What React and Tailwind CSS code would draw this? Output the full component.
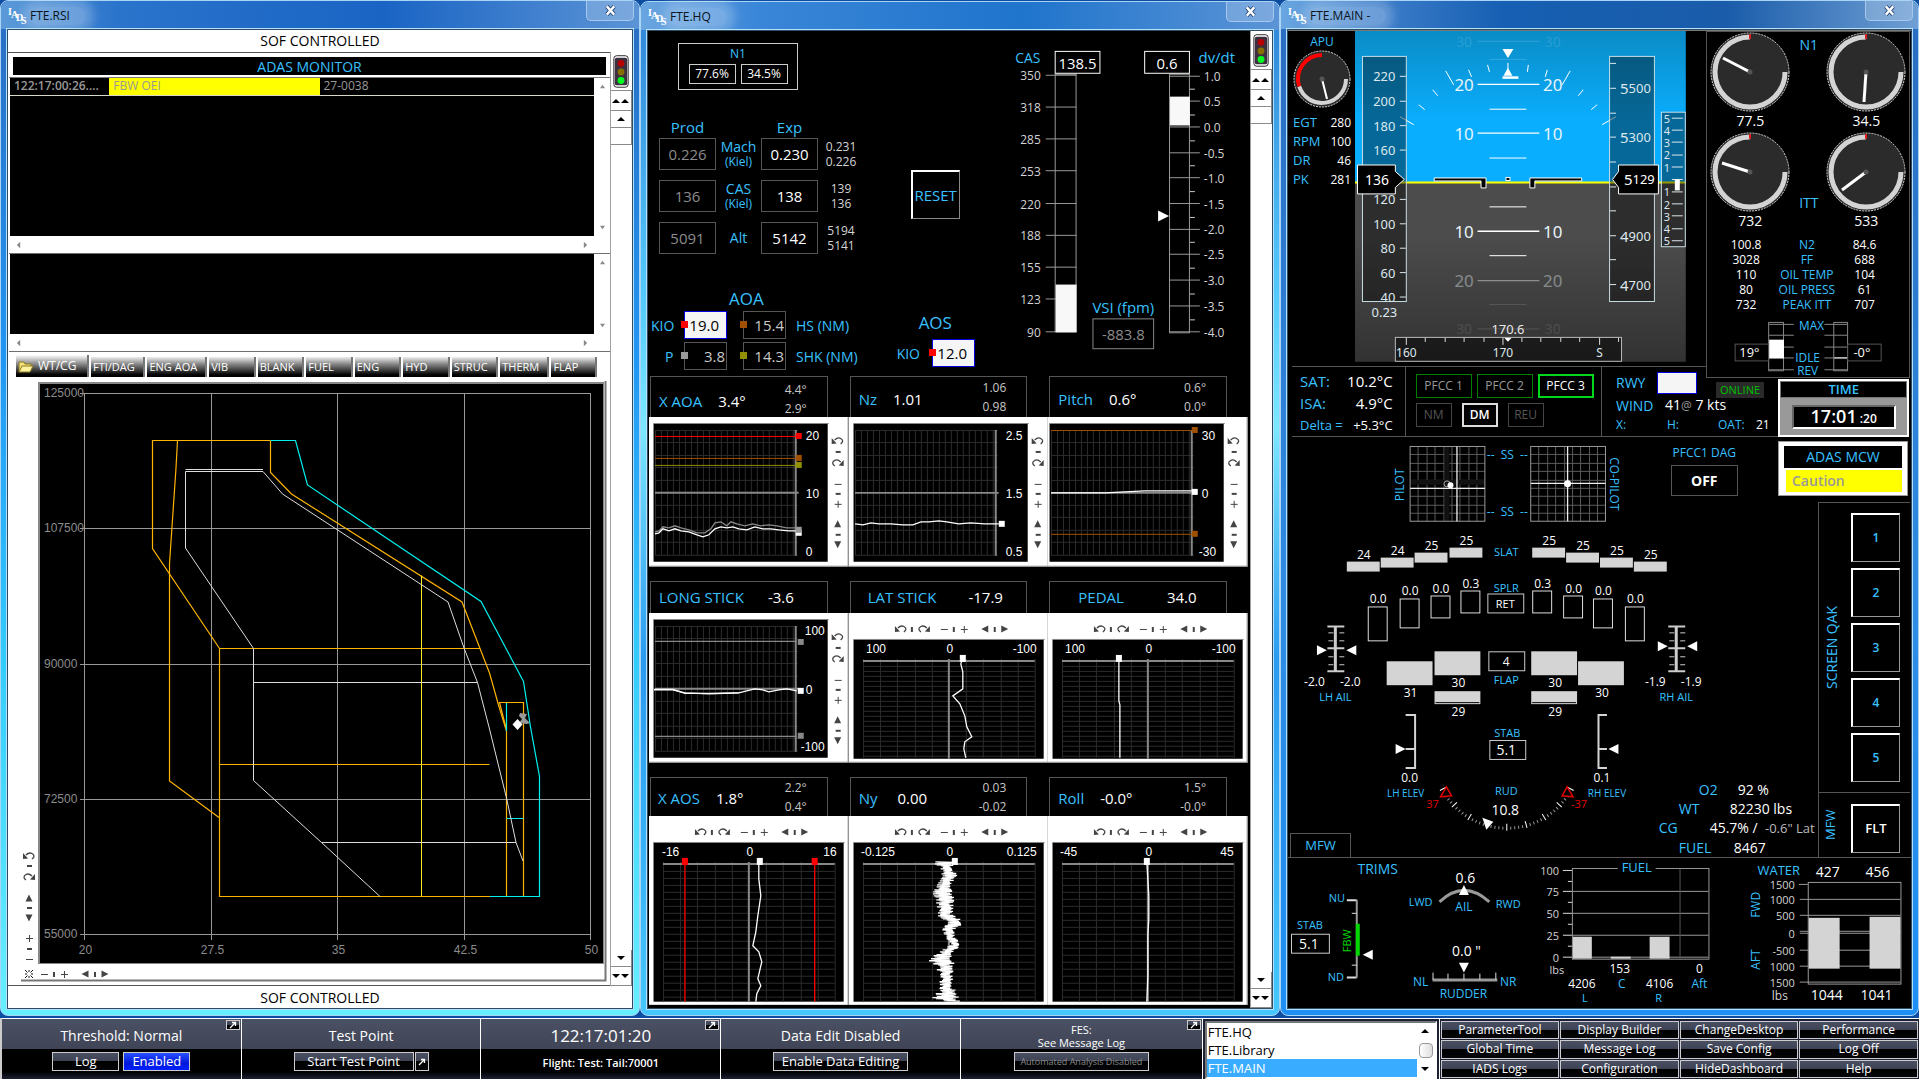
import React from "react";

const SIZES = {
  10: "text-[10px]",
  11: "text-[11px]",
  12: "text-[12px]",
  13: "text-[13px]",
  14: "text-[14px]",
  15: "text-[15px]",
  17: "text-[17px]",
};
const CYAN = "fill-[#38c0ff]";
const WHITE = "fill-white";
const SOFT = "fill-[#d4d4d4]";
const DIM = "fill-[#8c8c8c]";
const UI = "font-['Open_Sans',sans-serif]";
const ARIAL = "font-['Liberation_Sans',sans-serif]";

function T({ x, y, s = 12, c = WHITE, a = "middle", f = "", rotate, children, ...rest }) {
  return (
    <text
      x={x}
      y={y}
      textAnchor={a}
      dominantBaseline="central"
      transform={rotate ? `rotate(${rotate} ${x} ${y})` : undefined}
      className={`${SIZES[s]} ${c} ${f}`}
      {...rest}
    >
      {children}
    </text>
  );
}

const tri = {
  right: (x, y, r = 5) => `${x - r},${y - r} ${x + r},${y} ${x - r},${y + r}`,
  left: (x, y, r = 5) => `${x + r},${y - r} ${x - r},${y} ${x + r},${y + r}`,
  up: (x, y, r = 5) => `${x - r},${y + r} ${x + r},${y + r} ${x},${y - r}`,
  down: (x, y, r = 5) => `${x - r},${y - r} ${x + r},${y - r} ${x},${y + r}`,
};

/* ---------- window chrome ---------- */

function Logo() {
  return (
    <svg viewBox="0 0 18 18" className="h-[18px] w-[18px] shrink-0 overflow-visible font-['Liberation_Serif',serif] text-[10px] font-bold" aria-label="IADS">
      <text x="0" y="8" fill="#fff">I</text>
      <text x="3" y="11" fill="#fff">A</text>
      <text x="8" y="14" fill="#fff">D</text>
      <text x="13" y="17" fill="#fff">S</text>
    </svg>
  );
}

function Window({ title, frame, bar, children }) {
  return (
    <section className={`flex min-w-0 flex-col rounded-lg border border-[#a9d4f5] px-[6px] pb-[6px] ${frame}`}>
      <header className={`-mx-[6px] flex h-[28px] items-start justify-between rounded-t-lg pl-[7px] ${bar}`}>
        <div className="flex items-center gap-1 pt-[6px]">
          <Logo />
          <h1 className="rounded-full bg-white/25 pr-4 text-[12px] leading-[18px] text-[#0a1420] shadow-[0_0_10px_8px_rgba(255,255,255,0.22)]">
            {title}
          </h1>
        </div>
        <button
          aria-label={`Close ${title}`}
          className="mr-[5px] flex h-5 w-12 items-center justify-center rounded-b-[5px] border border-t-0 border-[#a6c8ee] bg-white/20"
        >
          <svg viewBox="0 0 12 12" className="h-[11px] w-[11px]">
            <path d="M2 1.500L10 10.500M10 1.500L2 10.500" stroke="#23426e" strokeWidth="4.500" />
            <path d="M2 1.500L10 10.500M10 1.500L2 10.500" stroke="#fff" strokeWidth="2.600" />
          </svg>
        </button>
      </header>
      <div className="flex flex-1 flex-col border border-[#2d4d66] outline outline-1 outline-[#b5e2fa]">{children}</div>
    </section>
  );
}

function Arrow({ d, count = 1 }) {
  const pts = d === "up" ? "0,4 8,4 4,0" : "0,0 8,0 4,4";
  return (
    <span className="flex items-center justify-center">
      {Array.from({ length: count }, (_, i) => (
        <svg key={i} viewBox="0 0 9 4" className="h-1 w-[9px]">
          <polygon points={pts} fill="#000" />
        </svg>
      ))}
    </span>
  );
}

function SideStrip() {
  const b = "flex w-full items-center justify-center border-r border-b border-[#8a8a8a] bg-white";
  return (
    <div className="flex w-[22px] shrink-0 flex-col border-l border-[#a0a0a0] bg-white">
      <svg viewBox="0 0 22 38" className="h-[38px] w-full">
        <rect x="3" y="3" width="15" height="33" rx="3" fill="#fff" stroke="#222" />
        <rect x="4" y="5" width="13" height="29" rx="2" fill="#3c3040" />
        <circle cx="10.500" cy="11" r="3.600" fill="#b80000" />
        <circle cx="10.500" cy="20" r="3.600" fill="#857000" />
        <circle cx="10.500" cy="29" r="3.600" fill="#00ff20" />
      </svg>
      <button aria-label="Page up" className={`h-[21px] border-t ${b}`}><Arrow d="up" count={2} /></button>
      <button aria-label="Up" className={`h-[17px] ${b}`}><Arrow d="up" /></button>
      <div className={`h-[17px] ${b}`} />
      <div className="flex-1" />
      <button aria-label="Down" className={`h-[17px] ${b}`}><Arrow d="down" /></button>
      <button aria-label="Page down" className={`h-[19px] ${b}`}><Arrow d="down" count={2} /></button>
    </div>
  );
}

/* ---------- small axis-control glyphs ---------- */

const CTL = "#444";
function Glyph({ k, x, y, vertical }) {
  const at = `translate(${x} ${y})`;
  if (k === "ccw" || k === "cw")
    return (
      <g transform={`${at}${k === "cw" ? " scale(-1 1)" : ""}`}>
        <path d="M-3 -1Q0 -4 3 -2.500Q7 0 3 3" fill="none" stroke={CTL} strokeWidth="1.300" />
        <polygon points="-6,-3 -6,3 -1,2.500" fill={CTL} />
      </g>
    );
  if (k === "tick")
    return vertical ? (
      <rect x={x - 2} y={y - 1} width="5" height="2" fill={CTL} />
    ) : (
      <rect x={x - 1} y={y - 2} width="2" height="5" fill={CTL} />
    );
  if (k === "minus") return <rect x={x - 3} y={y} width="7" height="1" fill={CTL} />;
  if (k === "plus") return <path d={`M${x - 3} ${y + 0.5}h7M${x + 0.5} ${y - 3}v7`} stroke={CTL} />;
  if (k === "burst")
    return (
      <path
        d="M-4 -4L-1.500 -1.500M4 4L1.500 1.500M4 -4L1.500 -1.500M-4 4L-1.500 1.500M0 -4V-2M0 2V4M-4 0H-2M2 0H4"
        transform={at} stroke="#111"
      />
    );
  return <polygon points={tri[k](x, y, 3.5)} fill={CTL} />;
}

function VControls({ x, y }) {
  return [["ccw", 24], ["tick", 35], ["cw", 46], ["minus", 67], ["tick", 77], ["plus", 87], ["up", 107], ["tick", 118], ["down", 128]].map(
    ([k, dy]) => <Glyph key={dy} k={k} x={x} y={y + dy} vertical />
  );
}
function HControls({ x, y }) {
  return [["ccw", 52], ["tick", 63], ["cw", 75], ["minus", 95], ["tick", 105], ["plus", 115], ["left", 136], ["tick", 146], ["right", 156]].map(
    ([k, dx]) => <Glyph key={dx} k={k} x={x + dx} y={y} />
  );
}

/* ---------- RSI window ---------- */

function ScrollList({ height, children }) {
  const a = "h-[5px] w-[5px] shrink-0";
  return (
    <div className={`flex flex-col border-b border-[#707070] bg-white pl-px ${height}`}>
      <div className="flex flex-1">
        <div className="flex-1 bg-black">{children}</div>
        <div className="flex w-4 flex-col items-center justify-between py-[6px]">
          <svg viewBox="0 0 6 6" className={a}><polygon points="0,5 6,5 3,1" fill="#888" /></svg>
          <svg viewBox="0 0 6 6" className={a}><polygon points="0,1 6,1 3,5" fill="#888" /></svg>
        </div>
      </div>
      <div className="flex h-[17px] items-center justify-between pr-[22px] pl-[6px]">
        <svg viewBox="0 0 6 8" className="h-2 w-[5px]"><polygon points="5,0 5,8 1,4" fill="#888" /></svg>
        <svg viewBox="0 0 6 8" className="h-2 w-[5px]"><polygon points="1,0 1,8 5,4" fill="#888" /></svg>
      </div>
    </div>
  );
}

const TABS = [
  ["FTI/DAG", 57], ["ENG AOA", 63], ["VIB", 48], ["BLANK", 48], ["FUEL", 48], ["ENG", 48],
  ["HYD", 48], ["STRUC", 48], ["THERM", 51], ["FLAP", 47],
];

function EnvelopePlot() {
  const xs = [[83.5, "20"], [210.5, "27.5"], [336.5, "35"], [463.5, "42.5"], [589.5, "50"]];
  const ys = [[393.5, "125000"], [528.5, "107500"], [664.5, "90000"], [799.5, "72500"], [934.5, "55000"]];
  return (
    <svg viewBox="8 381 601 602" className="block w-full bg-white" role="img" aria-label="Weight and centre of gravity envelope">
      <rect x="37" y="382" width="566" height="582" fill="#888" />
      <rect x="39" y="384" width="563" height="579" fill="#000" />
      <path d="M604.500 381V980.500H20" fill="none" stroke="#777" strokeWidth="2" />
      <g stroke="#999" fill="none">
        {xs.map(([x]) => <path key={x} d={`M${x} 393V940`} />)}
        {ys.map(([y]) => <path key={y} d={`M79 ${y}H590`} />)}
      </g>
      {ys.map(([y, l]) => <T key={l} x={43} y={y - 1} s={12} c={DIM} a="start" f={ARIAL}>{l}</T>)}
      {xs.map(([x, l]) => <T key={l} x={x + 1} y={950} s={12} c={DIM} f={ARIAL}>{l}</T>)}
      <g fill="none" stroke="#ffb400" strokeWidth="1.200">
        <path d="M269.500 440.500H151.500V548.500L218.500 648.500H479" />
        <path d="M176.500 440.500L175 468L168.500 563.500V781L218 817.500" />
        <path d="M218.500 648.500V896.500H489" />
        <path d="M269.500 440.500V472.500L290.500 494L461 602L479 648.500L488.500 673L497.500 705L505.500 731V896.500" />
        <path d="M505 728L498.500 702.500H522.500V896.500" />
        <path d="M218.500 764.500H488.500" />
      </g>
      <path d="M420.500 575.500V896.500" stroke="#ffee20" />
      <g fill="none" stroke="#00f0f0" strokeWidth="1.200">
        <path d="M269.500 440.500H294.500L306.500 485L480 601.500L522.500 681.500L529.500 727L538.500 776.500V896.500H489" />
        <path d="M505.500 703V731M505.500 818.500H522.500" />
      </g>
      <g fill="none" stroke="#ddd">
        <path d="M184.500 469.500H262M262 471.500H184.500V548L252.500 648.500V780.500L320.500 842.500L379 896.500" />
        <path d="M262 471.500L281.500 494L447 602L463 648L476.500 682.500L488 727L505.500 798L515 842.500L522 861" />
        <path d="M252.500 682.500H476.500M320.500 842.500H515" />
      </g>
      <path d="M519 713l7 1l-2 4l5 5l-3 1l-8 -1l3 -4l-3 -3z" fill="#999" />
      <polygon points="516.500,719 521.500,724.500 516.500,730 511.500,724.500" fill="#fff" />
      {[["ccw", 856], ["tick", 866], ["cw", 877], ["up", 898], ["tick", 908], ["down", 918], ["plus", 938], ["tick", 949], ["minus", 959]].map(
        ([k, y]) => <Glyph key={y} k={k} x={28} y={y} vertical />
      )}
      {[["burst", 28], ["minus", 43], ["tick", 53], ["plus", 63], ["left", 84], ["tick", 94], ["right", 104]].map(
        ([k, x]) => <Glyph key={x} k={k} x={x} y={974} />
      )}
    </svg>
  );
}

function RsiWindow() {
  const band = "flex h-[22px] items-center justify-center bg-white text-[14px] text-black";
  return (
    <Window
      title="FTE.RSI"
      frame="bg-[linear-gradient(180deg,#2a6cc0_0%,#2196f3_35%,#33ccff_65%,#66f0ff_100%)]"
      bar="bg-[linear-gradient(90deg,#5c9ad8_0%,#2a74cc_18%,#1a64c4_60%,#5b94d6_100%)]"
    >
      <div className={`pb-[2px] ${band}`}>SOF CONTROLLED</div>
      <div className="flex flex-1">
        <div className="flex min-w-0 flex-1 flex-col border-y border-[#555] bg-white pl-px">
          <div className="border-b border-[#777] px-1 pt-1 pb-[2px]">
            <h2 className="bg-black pt-px text-center text-[14px] leading-[17px] text-[#38c0ff]">ADAS MONITOR</h2>
          </div>
          <ScrollList height="h-[176px]">
            <table className="w-full table-fixed border-collapse text-left text-[12px] text-[#999]">
              <tbody>
                <tr className="h-[17px] border-b border-[#d8d8c8] leading-[16px]">
                  <td className="w-[17%] truncate p-0 px-1 font-semibold">122:17:00:26....</td>
                  <td className="w-[36%] bg-[#ffff00] p-0 px-1">FBW OEI</td>
                  <td className="p-0 px-1">27-0038</td>
                </tr>
              </tbody>
            </table>
          </ScrollList>
          <ScrollList height="h-[98px]" />
          <nav className="flex h-[29px] items-end bg-white pr-[13px] pb-[4px] pl-[7px]" aria-label="Displays">
            <button className="flex h-[22px] w-[73px] shrink-0 items-center gap-1 border-r-2 border-[#777] bg-[linear-gradient(#fff,#999_35%,#000_90%)] pl-[2px] text-[12px] text-white">
              <svg viewBox="0 0 16 13" className="h-[13px] w-4">
                <path d="M1 12V2h5l1 2h6v2" fill="#f5e27a" stroke="#8a7a20" />
                <path d="M1 12L4 6h11l-3 6z" fill="#fff3a0" stroke="#8a7a20" />
              </svg>
              WT/CG
            </button>
            {TABS.map(([t, w]) => (
              <button
                key={t}
                style={{ flexGrow: w }}
                className="h-5 w-0 border-r-2 border-l-2 border-r-[#777] border-l-white bg-[linear-gradient(#eee,#888_35%,#000_90%)] pl-[2px] text-left text-[11px] whitespace-nowrap text-white"
              >
                {t}
              </button>
            ))}
          </nav>
          <EnvelopePlot />
        </div>
        <SideStrip />
      </div>
      <div className={band}>SOF CONTROLLED</div>
    </Window>
  );
}

/* ---------- HQ window ---------- */

function Box({ className = "", children }) {
  return <div className={`flex items-center justify-center border ${className}`}>{children}</div>;
}

function ParamRow({ name, sub, prod, exp, hi, lo }) {
  return (
    <>
      <Box className="h-8 border-[#555] text-[15px] text-[#8c8c8c]">{prod}</Box>
      <div className="text-center text-[14px] leading-4 text-[#38c0ff]">
        {name}
        {sub && <div className="text-[12px] leading-[14px]">{sub}</div>}
      </div>
      <Box className="h-8 border-[#555] text-[15px] text-white">{exp}</Box>
      <div className="text-center text-[12px] leading-[15px] text-[#d4d4d4]">
        {hi}
        <br />
        {lo}
      </div>
    </>
  );
}

function Field({ label, value, square, bright }) {
  return (
    <div className="relative h-7 w-[43px]">
      <input
        aria-label={label}
        defaultValue={value}
        className={
          bright
            ? "h-full w-full border border-[#0000e0] bg-[#f5f5f5] pr-[7px] text-right text-[15px] text-black"
            : "h-full w-full border border-[#555] bg-black pr-px text-right text-[15px] text-[#c8c8c8]"
        }
      />
      <span className={`absolute top-[10px] -left-[3px] h-[7px] w-[7px] ${square}`} />
    </div>
  );
}

function SpeedTapes() {
  const cas = [[350, 74.5], [318, 106.5], [285, 138.5], [253, 170.5], [220, 203.5], [188, 235.5], [155, 267.5], [123, 299.5], [90, 332.5]];
  const dv = [75.5, 100.5, 126.5, 152.5, 177.5, 203.5, 229.5, 254.5, 280.5, 306.5, 332.5];
  return (
    <svg viewBox="1000 31 250 346" className="block w-full" role="img" aria-label="CAS, dv/dt and VSI">
      <T x={1029} y={57} s={14} c={CYAN}>CAS</T>
      <T x={1219} y={56} s={15} c={CYAN}>dv/dt</T>
      <g fill="none" stroke="#999">
        <rect x="1056.500" y="73.500" width="21" height="259" />
        <rect x="1171.500" y="73.500" width="20" height="260" />
        {cas.map(([v, y]) => <path key={v} d={`M1047 ${y}H1078`} />)}
        {dv.map((y) => <path key={y} d={`M1172 ${y}H1202`} />)}
        {dv.slice(1).map((y, i) => <path key={y} d={`M1192 ${Math.round((y + dv[i]) / 2) + 0.5}H1197`} stroke="#ccc" />)}
      </g>
      <rect x="1057" y="285" width="21" height="48" fill="#f8f8f8" />
      <rect x="1172" y="96" width="20" height="29" fill="#f8f8f8" />
      {cas.map(([v, y]) => <T key={v} x={1042} y={y} s={12} c={SOFT} a="end">{v}</T>)}
      {dv.map((y, i) => <T key={y} x={1206} y={y} s={12} c={SOFT} a="start">{(1 - i * 0.5).toFixed(1)}</T>)}
      <rect x="1056.500" y="50.500" width="45" height="22" stroke="#fff" />
      <rect x="1146.500" y="50.500" width="45" height="22" stroke="#fff" />
      <T x={1079} y={62} s={15}>138.5</T>
      <T x={1169} y={62} s={15}>0.6</T>
      <polygon points={tri.right(1165.5, 216, 5.5)} fill="#fff" />
      <T x={1125} y={308} s={15} c={CYAN}>VSI (fpm)</T>
      <rect x="1094.500" y="319.500" width="61" height="30" fill="none" stroke="#888" />
      <T x={1125} y={335} s={15} c={DIM}>-883.8</T>
    </svg>
  );
}

function ParamHeader({ name, value, hi, lo, place = "pl-2 pt-1 gap-4" }) {
  return (
    <div className="ml-px w-[89%] border border-b-0 border-[#555]">
      <div className={`flex h-full items-center pr-5 text-[15px] ${place}`}>
        <h3 className="text-[#38c0ff]">{name}</h3>
        <span className="text-white">{value}</span>
        {hi && (
          <div className="-mt-1 ml-auto text-right text-[12px] leading-[19px] text-[#c8c8c8]">
            {hi}
            <br />
            {lo}
          </div>
        )}
      </div>
    </div>
  );
}

function Frame({ h }) {
  return (
    <>
      <rect width="200" height={h} fill="#fff" />
      <path d={`M0 ${h - 0.5}H199.500V0`} stroke="#888" fill="none" />
    </>
  );
}

/* Strip chart whose time axis runs left to right. */
function StripH({ shift = 0, labels, limits = [], marks = [], traces, labelX = 157, label }) {
  const cols = Array.from({ length: 24 }, (_, i) => 6 + i * 6).filter((x) => x < 147);
  const rows = Array.from({ length: 11 }, (_, i) => 13 + i * 12.5);
  return (
    <svg viewBox="0 0 200 150" className="block w-full" role="img" aria-label={label}>
      <Frame h={150} />
      <g transform={`translate(${shift} 0)`}>
        <path d="M4.500 145V6.500H180" fill="none" stroke="#888" />
        <rect x="5" y="7" width="174" height="138" fill="#000" />
        <g stroke="#2c2c2c">
          {cols.map((x) => <path key={x} d={`M${x + 0.5} 13V138`} />)}
          {rows.map((y) => <path key={y} d={`M6 ${Math.floor(y) + 0.5}H149`} />)}
        </g>
        <path d="M6 76H150M147 13V139" stroke="#888" strokeWidth="2" />
        {limits.map(([y, c]) => (
          <g key={y}>
            <path d={`M6 ${y + 0.5}H148`} stroke={c} />
            <rect x="147" y={y - 3} width="6" height="6" fill={c} />
          </g>
        ))}
        {traces.map(([c, pts], i) => <polyline key={i} points={pts} fill="none" stroke={c} strokeWidth="1.300" />)}
        {marks.map(([x, y, c]) => <rect key={y} x={x} y={y} width="6" height="6" fill={c} />)}
        {labels.map(([y, l, x]) => (
          <T key={l} x={x ?? labelX} y={y} s={12} a="start" f={ARIAL}>{l}</T>
        ))}
        <VControls x={189} y={0} />
      </g>
    </svg>
  );
}

/* Strip chart whose time axis runs downwards. */
function StripV({ h, step, labels, traces, marks, limits = [], label }) {
  const rows = [];
  for (let y = 49 + step; y < h - 5; y += step) rows.push(y);
  const cols = Array.from({ length: 11 }, (_, i) => Math.round(14 + i * 17.2));
  return (
    <svg viewBox={`0 0 200 ${h}`} className="block w-full" role="img" aria-label={label}>
      <Frame h={h} />
      <HControls x={0} y={16} />
      <path d={`M4.500 ${h - 4}V26.500H196`} fill="none" stroke="#888" />
      <rect x="5" y="27" width="190" height={h - 31} fill="#000" />
      <g stroke="#2c2c2c">
        {rows.map((y) => <path key={y} d={`M14 ${y - 0.5}H186`} />)}
        {cols.map((x) => <path key={x} d={`M${x + 0.5} 46V${h - 4}`} />)}
      </g>
      <path d={`M14 48H186M100 46V${h - 4}`} stroke="#888" strokeWidth="2" />
      {labels.map(([x, l, a]) => <T key={l} x={x} y={36} s={12} a={a} f={ARIAL}>{l}</T>)}
      {limits.map((x) => (
        <g key={x}>
          <path d={`M${x} 46V${h - 4}`} stroke="#f00" strokeWidth="1.300" />
          <rect x={x - 3} y="42" width="6" height="7" fill="#f00" />
        </g>
      ))}
      {traces.map((pts, i) => <polyline key={i} points={pts} fill="none" stroke="#fff" strokeWidth="1.300" />)}
      {marks.map((x) => <rect key={x} x={x - 3} y="42" width="6" height="7" fill="#fff" />)}
    </svg>
  );
}

/* Ny signal: jitter between a left and a right bound that vary with time. */
function noiseTrace() {
  const env = [[46, 83, 107], [52, 91, 104], [60, 93, 109], [66, 90, 104], [76, 82, 104], [84, 86, 106], [99, 87, 105], [107, 97, 117], [113, 91, 106], [121, 97, 106], [129, 100, 115], [137, 89, 104], [144, 79, 106], [152, 87, 105], [162, 91, 104], [172, 90, 106], [182, 83, 112], [186, 95, 112]];
  const out = [];
  let seed = 7;
  for (let y = 46; y < 186; y += 0.5) {
    const k = Math.max(0, env.findIndex((e) => e[0] > y) - 1);
    const [y0, l0, r0] = env[k];
    const [y1, l1, r1] = env[k + 1];
    const t = (y - y0) / (y1 - y0);
    seed = (seed * 73 + 41) % 1009;
    const q = 0.35 + (0.65 * seed) / 1009;
    const left = l0 + (l1 - l0) * t;
    const right = r0 + (r1 - r0) * t;
    const mid = (left + right) / 2;
    out.push(`${(out.length % 2 ? mid + (right - mid) * q : mid - (mid - left) * q).toFixed(1)},${y}`);
  }
  return out.join(" ");
}
const NY = noiseTrace();

const AOA_HI = "6,115 10,114 14,110 20,111 26,109 32,111 40,113 48,116 56,116 62,112 66,106 72,105 78,109 82,105 88,107 96,109 104,107 112,109 120,108 128,109 138,111 147,111";
const AOA_LO = "6,117 10,116 14,112 20,114 26,112 32,114 40,115 48,118 54,120 60,118 66,112 72,110 78,111 84,110 90,112 98,113 106,110 114,112 122,112 130,113 140,114 147,114";

function HqWindow() {
  return (
    <Window
      title="FTE.HQ"
      frame="mt-px bg-[linear-gradient(180deg,#2f83d6_0%,#55ccff_30%,#7ae8ff_42%,#2a9af0_65%,#44c8ff_100%)]"
      bar="bg-[linear-gradient(90deg,#6aa6e0_0%,#3a86d8_18%,#1f74cc_60%,#5b94d6_100%)]"
    >
      <div className="flex flex-1">
        <div className="flex min-w-0 flex-1 flex-col bg-black pt-px pr-[2px] pl-px">
          <div className="grid grid-cols-[219fr_132fr_249fr]">
            <div className="flex flex-col">
              <div className="mt-[11px] ml-[29px] w-[120px] border border-[#ccc] pb-[5px] text-center">
                <h2 className="text-[12px] leading-5 text-[#38c0ff]">N1</h2>
                <div className="flex justify-center gap-[5px] text-[12px] text-white">
                  <Box className="h-5 w-[47px] border-[#ccc]">77.6%</Box>
                  <Box className="h-5 w-[47px] border-[#ccc]">34.5%</Box>
                </div>
              </div>
              <div className="mt-[26px] ml-[10px] grid grid-cols-[57px_45px_57px_46px] items-center gap-y-[10px]">
                <h2 className="-mb-[10px] text-center text-[15px] leading-[22px] text-[#38c0ff]">Prod</h2>
                <span />
                <h2 className="-mb-[10px] text-center text-[15px] leading-[22px] text-[#38c0ff]">Exp</h2>
                <span />
                <ParamRow name="Mach" sub="(Kiel)" prod="0.226" exp="0.230" hi="0.231" lo="0.226" />
                <ParamRow name="CAS" sub="(Kiel)" prod="136" exp="138" hi="139" lo="136" />
                <ParamRow name="Alt" prod="5091" exp="5142" hi="5194" lo="5141" />
              </div>
              <h2 className="mt-[33px] ml-[80px] text-[17px] leading-6 text-[#38c0ff]">AOA</h2>
              <div className="grid grid-cols-[35px_43px_16px_43px_auto] items-center gap-y-[3px] text-[14px] text-[#38c0ff]">
                <span className="pl-[2px]">KIO</span>
                <Field label="AOA KIO" value="19.0" square="bg-[#ff0000]" bright />
                <span />
                <Field label="HS (NM)" value="15.4" square="bg-[#a05000]" />
                <span className="pl-[10px]">HS (NM)</span>
                <span className="pl-4">P</span>
                <Field label="AOA P" value="3.8" square="bg-[#999]" />
                <span />
                <Field label="SHK (NM)" value="14.3" square="bg-[#909000]" />
                <span className="pl-[10px]">SHK (NM)</span>
              </div>
            </div>
            <div className="flex flex-col pt-[138px] pl-[29px]">
              <button className="ml-[14px] flex h-[49px] w-[49px] items-center justify-center border-t-2 border-r border-b border-l-2 border-white border-r-[#888] border-b-[#888] text-[15px] text-[#38c0ff]">
                RESET
              </button>
              <h2 className="mt-[92px] ml-[22px] text-[17px] leading-6 text-[#38c0ff]">AOS</h2>
              <label className="mt-1 flex items-center gap-3 text-[14px] text-[#38c0ff]">
                KIO
                <Field label="AOS KIO" value="12.0" square="bg-[#ff0000]" bright />
              </label>
            </div>
            <SpeedTapes />
          </div>

          <div className="grid grid-cols-3 [&>*:nth-child(-n+3)]:h-[41px]">
            <ParamHeader name="X AOA" value="3.4°" hi="4.4°" lo="2.9°" place="pl-2 pt-2 gap-4" />
            <ParamHeader name="Nz" value="1.01" hi="1.06" lo="0.98" />
            <ParamHeader name="Pitch" value="0.6°" hi="0.6°" lo="0.0°" />
            <StripH
              label="X AOA"
              labels={[[19, "20"], [77, "10"], [135, "0"]]}
              limits={[[19, "#ff0000"], [41, "#a05000"], [48, "#909000"]]}
              traces={[["#888", AOA_HI], ["#fff", AOA_LO]]}
              marks={[[147, 113, "#fff"], [147, 110, "#999"]]}
            />
            <StripH
              label="Nz"
              labels={[[19, "2.5"], [77, "1.5"], [135, "0.5"]]}
              traces={[["#fff", "6,107 14,108 22,106 30,107 42,107 54,108 64,108 72,105 80,105 90,104 98,105 110,107 122,106 136,107 150,107"]]}
              marks={[[150, 104, "#fff"]]}
            />
            <StripH
              label="Pitch"
              shift={-3}
              labels={[[19, "30"], [77, "0"], [135, "-30", 154]]}
              limits={[[13, "#a05000"], [117, "#a05000"]]}
              traces={[["#fff", "6,76 60,76 100,74 147,74"]]}
              marks={[[147, 72, "#fff"]]}
            />
          </div>

          <div className="mt-[14px] grid grid-cols-3 [&>*:nth-child(-n+3)]:h-[32px]">
            <ParamHeader name="LONG STICK" value="-3.6" place="pl-2 gap-6" />
            <ParamHeader name="LAT STICK" value="-17.9" place="pl-[17px] gap-8" />
            <ParamHeader name="PEDAL" value="34.0" place="pl-7 gap-[43px]" />
            <StripH
              label="Long stick"
              labels={[[18, "100", 156], [77, "0", 157], [134, "-100", 152]]}
              traces={[["#888", "6,28.500 148,28.500"], ["#888", "6,123.500 148,123.500"], ["#fff", "5,77 24,77 36,80 60,81 90,80 98,78 106,76 114,77 120,79 130,77 138,76 148,78"], ["#fff", "5,76.500 24,76.500 36,80.500 60,80.500 90,80"]]}
              marks={[[149, 26, "#888"], [149, 75, "#fff"], [149, 120, "#888"]]}
            />
            <StripV
              h={150}
              step={5}
              label="Lat stick"
              labels={[[17, "100", "start"], [101, "0", "middle"], [188, "-100", "end"]]}
              traces={["114,44 112,51 114,59 114,76 104,83 111,91 116,103 118,114 123,124 116,129 115,136 117,145"]}
              marks={[114]}
            />
            <StripV
              h={150}
              step={5}
              label="Pedal"
              labels={[[17, "100", "start"], [101, "0", "middle"], [188, "-100", "end"]]}
              traces={["71,44 71,88 72,92 72,145"]}
              marks={[71]}
            />
          </div>

          <div className="mt-[14px] grid grid-cols-3 [&>*:nth-child(-n+3)]:h-[39px]">
            <ParamHeader name="X AOS" value="1.8°" hi="2.2°" lo="0.4°" place="pl-[7px] pt-1 gap-4" />
            <ParamHeader name="Ny" value="0.00" hi="0.03" lo="-0.02" place="pl-2 pt-1 gap-5" />
            <ParamHeader name="Roll" value="-0.0°" hi="1.5°" lo="-0.0°" place="pl-2 pt-1 gap-4" />
            <StripV
              h={190}
              step={7}
              label="X AOS"
              labels={[[13, "-16", "start"], [101, "0", "middle"], [188, "16", "end"]]}
              limits={[36, 166]}
              traces={["110,46 110,63 112,80 109,100 107,116 104,130 110,136 113,146 109,163 112,170 108,178 107,186"]}
              marks={[111]}
            />
            <StripV
              h={190}
              step={7}
              label="Ny"
              labels={[[12, "-0.125", "start"], [101, "0", "middle"], [188, "0.125", "end"]]}
              traces={[NY]}
              marks={[106]}
            />
            <StripV
              h={190}
              step={7}
              label="Roll"
              labels={[[12, "-45", "start"], [101, "0", "middle"], [186, "45", "end"]]}
              traces={["99,46 101,80 101,103 100,120 100,160 99,186"]}
              marks={[99]}
            />
          </div>
        </div>
        <SideStrip />
      </div>
    </Window>
  );
}

/* ---------- MAIN window ---------- */

function Dial({ r, nx, ny, apu }) {
  const R = r - 4;
  const s = 2 * r + 2;
  return (
    <svg viewBox={`${-r - 1} ${-r - 1} ${s} ${s}`} className="mx-auto block" width={s} height={s}>
      <circle r={r} fill="#2b2b2b" stroke="#ddd" strokeDasharray="2 1" />
      <path
        d={apu ? `M${R} 0A${R} ${R} 0 0 1 ${-R * 0.95} ${R * 0.31}` : `M${R} 0A${R} ${R} 0 1 1 0 ${-R}`}
        fill="none" stroke="#d4d4d4" strokeWidth={apu ? 4 : 5}
      />
      {apu ? (
        <path d={`M${-R * 0.95} ${R * 0.31}A${R} ${R} 0 0 1 0 ${-R}`} fill="none" stroke="#ff0000" strokeWidth="4" />
      ) : (
        <path d={`M0 ${-R - 3}V${-R + 2}`} stroke="#e02020" strokeWidth="2" />
      )}
      <path d={`M0 0L${nx} ${ny}`} stroke="#fff" strokeWidth={apu ? 2 : 3} />
      <circle r="2.500" fill="#555" />
    </svg>
  );
}

function Apu() {
  return (
    <div className="pt-[2px] pr-1 pl-[5px]">
      <h2 className="text-center text-[12px] leading-[17px] text-[#38c0ff]">APU</h2>
      <Dial r={28} nx={5} ny={20} apu />
      <dl className="mt-[5px] grid grid-cols-2 leading-[19px]">
        {[["EGT", 280], ["RPM", 100], ["DR", 46], ["PK", 281]].map(([k, v]) => (
          <React.Fragment key={k}>
            <dt className="text-[13px] text-[#38c0ff]">{k}</dt>
            <dd className="text-right text-[12px] font-medium text-white">{v}</dd>
          </React.Fragment>
        ))}
      </dl>
    </div>
  );
}

function Pfd() {
  const rollTicks = [[1487, 65, 1489, 72], [1528, 65, 1527, 72], [1468, 70, 1471, 77], [1547, 70, 1545, 77], [1445, 71, 1453, 85], [1570, 71, 1562, 85], [1432, 90, 1437, 96], [1583, 90, 1578, 96], [1418, 105, 1424, 110], [1597, 105, 1591, 110], [1399, 117, 1413, 125], [1616, 117, 1602, 125]];
  const ladder = [[41.5, 30, 0.12], [84.5, 20, 1], [133.5, 10, 1], [232, 10, 1], [281.5, 20, 0.4], [330, 30, 0.1]];
  const half = [[59.5, 0.15], [109.5, 1], [158.5, 1], [207.5, 1], [256.5, 1], [305.5, 0.12]];
  const spd = [[220, 76.5], [200, 101.5], [180, 126], [160, 150.5], [120, 200], [100, 224.5], [80, 249], [60, 273.5], [40, 298]];
  const alt = [[5500, 88.5], [5300, 137.5], [4900, 236.5], [4700, 285.5]];
  const hdg = [1405.5, 1424.5, 1444.5, 1463.5, 1483.5, 1502.5, 1521.5, 1540.5, 1560.5, 1579.5, 1599.5, 1618.5];
  return (
    <svg viewBox="1354 31 332 332" className="block w-full font-['Noto_Sans',sans-serif]" role="img" aria-label="Primary flight display">
      <defs>
        <linearGradient id="sky" x1="0" y1="0" x2="0" y2="1">
          <stop offset="0" stopColor="#0a8cc6" />
          <stop offset="0.600" stopColor="#0aaeff" />
        </linearGradient>
        <linearGradient id="ground" x1="0" y1="0" x2="0" y2="1">
          <stop offset="0.300" stopColor="#4c4c4c" />
          <stop offset="1" stopColor="#323232" />
        </linearGradient>
      </defs>
      <rect x="1354" y="31" width="332" height="152" fill="url(#sky)" />
      <rect x="1354" y="183" width="332" height="180" fill="url(#ground)" />
      <path d="M1354 183H1686" stroke="#ffff00" strokeWidth="2" />
      <g stroke="#fff">
        {rollTicks.map((t) => <line key={t.join()} x1={t[0]} y1={t[1]} x2={t[2]} y2={t[3]} />)}
        {ladder.map(([y, , o]) => <path key={y} d={`M1477 ${y}H1539`} opacity={o} strokeWidth="1.300" />)}
        {half.map(([y, o]) => <path key={y} d={`M1489 ${y}H1526`} opacity={o} />)}
      </g>
      {ladder.map(([y, v, o]) => (
        <g key={y} opacity={o}>
          <T x={1463.5} y={y} s={v === 30 ? 14 : 17} c="fill-[#e8f4fa]">{v}</T>
          <T x={1552.5} y={y} s={v === 30 ? 14 : 17} c="fill-[#e8f4fa]">{v}</T>
        </g>
      ))}
      <polygon points="1502,49 1513,49 1507.500,58" fill="#fff" />
      <polygon points="1503,76 1512,76 1507.500,68" fill="#fff" />
      <path d="M1507.500 63V69" stroke="#fff" />
      <rect x="1502" y="76.500" width="16" height="2.500" fill="#fff" />
      <g fill="#000" stroke="#fff">
        <path d="M1433.500 178.500H1485.500V188.500H1480.500V181.500H1433.500Z" />
        <path d="M1529.500 178.500H1581.500V181.500H1534.500V188.500H1529.500Z" />
        <rect x="1505.500" y="178" width="4" height="3" />
      </g>
      <g fill="rgba(0,0,0,0.400)" stroke="#c8dce4">
        <rect x="1361.500" y="56.500" width="44" height="246" />
        <rect x="1609.500" y="56.500" width="45" height="246" />
        <rect x="1661.500" y="112.500" width="24" height="135" />
      </g>
      <g stroke="#dde8ee">
        {spd.map(([v, y]) => <path key={v} d={`M1399 ${y}H1405`} />)}
        {[63.5, 88.5, 113.5, 137.5, 162.5, 187.5, 211.5, 236.5, 260.5, 285.5].map((y) => <path key={y} d={`M1610 ${y}H1616`} />)}
        {[118.5, 130.5, 142.5, 155.5, 167.5, 180, 192.5, 204.5, 216.5, 229.5, 241.5].map((y) => <path key={y} d={`M1672 ${y}H1683`} />)}
      </g>
      {spd.map(([v, y]) => <T key={v} x={1394.5} y={y} s={13} c="fill-[#dde8ee]" a="end">{v}</T>)}
      {alt.map(([v, y]) => (
        <T key={v} x={1620} y={y} s={15} c="fill-[#dde8ee]" a="start">
          {String(v)[0]}
          <tspan className="text-[13px]">{String(v).slice(1)}</tspan>
        </T>
      ))}
      {[5, 4, 3, 2, 1].map((v, i) => (
        <g key={v}>
          <T x={1667} y={118.5 + i * 12.25} s={11} c="fill-[#dde8ee]">{v}</T>
          <T x={1667} y={241.5 - i * 12.25} s={11} c="fill-[#dde8ee]">{v}</T>
        </g>
      ))}
      <rect x="1675" y="180" width="5" height="11" fill="#fff" />
      <g fill="#000" stroke="#fff">
        <path d="M1356.500 165.500H1394.500V172L1403.500 180L1394.500 188V194.500H1356.500Z" />
        <path d="M1658.500 165.500H1618.500V172L1612.500 180L1618.500 188V194.500H1658.500Z" />
      </g>
      <T x={1376} y={180} s={14}>136</T>
      <T x={1624} y={180} s={15} a="start">5<tspan className="text-[13px]">129</tspan></T>
      <T x={1383.5} y={313} s={13} c="fill-[#dde8ee]">0.23</T>
      <T x={1507.5} y={330} s={13} c="fill-[#e8e8e8]">170.6</T>
      <rect x="1394.500" y="338.500" width="227" height="24" fill="rgba(0,0,0,0.500)" stroke="#bbb" />
      {hdg.map((x, i) => <path key={x} d={`M${x} 339V${i % 5 === 0 ? 346 : 343}`} stroke="#ddd" />)}
      <polygon points="1504,339 1511,339 1507.500,343" fill="#fff" />
      <T x={1405.5} y={354} s={12} c="fill-[#dde8ee]">160</T>
      <T x={1502.5} y={354} s={12} c="fill-[#dde8ee]">170</T>
      <T x={1599.5} y={354} s={12} c="fill-[#dde8ee]">S</T>
    </svg>
  );
}

function Throttle() {
  const ys = [326.5, 337.5, 349.5, 360.5, 372.5];
  return (
    <svg viewBox="1706 318 205 62" className="mt-[4px] block w-full" role="img" aria-label="Throttle levers">
      <g fill="none" stroke="#888">
        <rect x="1768.500" y="324.500" width="15" height="49" />
        <rect x="1834.500" y="324.500" width="14" height="49" />
        <rect x="1734.500" y="346.500" width="34" height="17" stroke="#555" />
        <rect x="1848.500" y="346.500" width="34" height="17" stroke="#555" />
        {ys.map((y) => <path key={y} d={`M1769 ${y}H1794M1825 ${y}H1848`} />)}
      </g>
      <rect x="1769" y="342" width="15" height="19" fill="#fff" />
      <path d="M1835 360.500H1848" stroke="#fff" />
      <T x={1812} y={327} s={12} c={CYAN}>MAX</T>
      <T x={1808} y={360} s={12} c={CYAN}>IDLE</T>
      <T x={1808} y={373} s={12} c={CYAN}>REV</T>
      <T x={1749} y={355} s={13}>19°</T>
      <T x={1863} y={355} s={13}>-0°</T>
    </svg>
  );
}

function EnginePanel() {
  const v = "text-center text-[14px] leading-[18px] text-white";
  const l = "text-center text-[14px] text-[#38c0ff]";
  const rows = [["100.8", "N2", "84.6"], ["3028", "FF", "688"], ["110", "OIL TEMP", "104"], ["80", "OIL PRESS", "61"], ["732", "PEAK ITT", "707"]];
  return (
    <div className="relative z-10 mr-px border border-[#555] bg-black">
      <div className="grid grid-cols-[88fr_30fr_86fr] gap-y-[2px]">
        <div><Dial r={39} nx={-27} ny={-14} /><p className={v}>77.5</p></div>
        <h2 className={`pt-[2px] ${l}`}>N1</h2>
        <div><Dial r={39} nx={-2} ny={30} /><p className={v}>34.5</p></div>
        <div><Dial r={39} nx={-28} ny={-9} /><p className={v}>732</p></div>
        <h2 className={`self-end pb-[17px] ${l}`}>ITT</h2>
        <div><Dial r={39} nx={-24} ny={18} /><p className={v}>533</p></div>
      </div>
      <table className="mt-[7px] w-full table-fixed border-collapse text-center text-[12px] leading-[15px] text-white">
        <tbody>
          {rows.map(([a, n, b]) => (
            <tr key={n}>
              <td className="w-[34%] p-0 pl-[10px]">{a}</td>
              <th className="w-[31%] p-0 font-normal whitespace-nowrap text-[#38c0ff]">{n}</th>
              <td className="p-0 pr-[18px]">{b}</td>
            </tr>
          ))}
        </tbody>
      </table>
      <Throttle />
    </div>
  );
}

function StatusRow() {
  const cell = "border-t border-b border-[#555]";
  const pf = "flex h-6 items-center justify-center text-[12px]";
  return (
    <div className="-mt-3 grid grid-cols-[114fr_197fr_177fr_131fr] pr-[2px] pl-1 text-[#38c0ff]">
      <dl className={`grid grid-cols-[1fr_auto] content-start border-r pt-[3px] pr-3 pl-2 text-[15px] leading-[22px] ${cell}`}>
        <dt>SAT:</dt><dd className="text-right text-white">10.2°C</dd>
        <dt>ISA:</dt><dd className="text-right text-white">4.9°C</dd>
        <dt className="text-[13px]">Delta =</dt><dd className="text-right text-[13px] text-white">+5.3°C</dd>
      </dl>
      <div className={`flex flex-col gap-[5px] border-r pt-[7px] pl-[10px] ${cell}`}>
        <div className="flex gap-[5px]">
          <button className={`w-14 border border-[#008000] text-[#999] ${pf}`}>PFCC 1</button>
          <button className={`w-14 border border-[#008000] text-[#999] ${pf}`}>PFCC 2</button>
          <button className={`w-14 border-2 border-[#00d820] text-white ${pf}`}>PFCC 3</button>
        </div>
        <div className="flex gap-[10px]">
          <button className={`w-9 border border-[#444] text-[#555] ${pf}`}>NM</button>
          <button className={`w-9 border-2 border-[#ddd] font-semibold text-white ${pf}`}>DM</button>
          <button className={`w-9 border border-[#444] text-[#555] ${pf}`}>REU</button>
        </div>
      </div>
      <div className={`flex flex-col pt-[4px] pl-[14px] ${cell}`}>
        <div className="flex h-[23px] items-center">
          <label htmlFor="rwy" className="w-[41px] text-[14px]">RWY</label>
          <input id="rwy" className="h-[22px] w-10 border border-[#0000e0] bg-[#f5f5f5] text-[12px] text-black" />
          <span className="mt-[14px] ml-[19px] bg-[#2a2a2a] px-1 text-[11px] leading-4 text-[#00c000]">ONLINE</span>
        </div>
        <div className="flex items-center text-[14px] leading-[22px]">
          <span className="w-[49px]">WIND</span>
          <span className="text-white">41<span className="text-[12px] text-[#999]">@</span> 7 kts</span>
        </div>
        <div className="flex text-[12px] leading-4">
          <span className="w-[51px]">X:</span>
          <span className="w-[51px]">H:</span>
          <span className="w-[38px]">OAT:</span>
          <span className="text-white">21</span>
        </div>
      </div>
      <div className="mt-[13px] flex flex-col border-2 border-white bg-[#999]">
        <h2 className="border border-[#777] bg-black text-center text-[13px] leading-[15px] font-semibold">TIME</h2>
        <div className="flex flex-1 items-center justify-center">
          <p className="flex h-6 w-[82%] items-center justify-center border-2 border-white border-t-[#666] border-l-[#666] bg-black text-[18px] font-semibold text-white">
            17:01<span className="pt-1 text-[12px]">&nbsp;:20</span>
          </p>
        </div>
      </div>
    </div>
  );
}

function Crosshair({ x, y, cx, cy, gap }) {
  const lines = [1, 2, 3, 4, 5, 6, 7, 8].map((i) => Math.round(i * 8.4));
  return (
    <g fill="none">
      <g stroke="#5a5a5a">
        {lines.map((d) => <path key={d} d={`M${x + d} ${y}v75M${x} ${y + d}h75`} />)}
      </g>
      {gap && <path d={`M${x + 37} ${y}v75M${x} ${y + 36}h75`} stroke="#111" strokeWidth="5" />}
      <rect x={x} y={y} width="75" height="75" stroke="#999" />
      <path d={`M${cx} ${y}v75M${x} ${cy}h75`} stroke="#eee" strokeWidth="1.300" />
    </g>
  );
}

function Aileron({ x, my, l, name }) {
  return (
    <g>
      <path d={`M${x} 628V673`} stroke="#ccc" strokeWidth="3" />
      <path d={`M${x - 8} 628H${x + 9}M${x - 8} 650H${x + 9}M${x - 8} 673H${x + 9}`} stroke="#ccc" strokeWidth="2" />
      {[634.5, 642.5, 658.5, 666.5].map((y) => <path key={y} d={`M${x - 7} ${y}h5M${x + 4} ${y}h5`} stroke="#ccc" />)}
      <polygon points={tri.right(x - 13.5, my)} fill="#fff" />
      <polygon points={tri.left(x + 16, my)} fill="#fff" />
      <T x={x - 21} y={683}>{l}</T>
      <T x={x + 15} y={683}>{l}</T>
      <T x={x} y={698} s={11} c={CYAN}>{name}</T>
    </g>
  );
}

function FlightControls() {
  const slats = [[1346, 563, 24], [1380, 559, 24], [1414, 554, 25], [1449, 549, 25], [1532, 549, 25], [1566, 554, 25], [1600, 559, 25], [1634, 563, 25]];
  const spoilers = [[1367.5, 608.5, 34, "0.0"], [1399.5, 600.5, 29, "0.0"], [1430.5, 597.5, 22, "0.0"], [1460.5, 592.5, 22, "0.3"], [1532.5, 592.5, 22, "0.3"], [1563.5, 597.5, 22, "0.0"], [1593.5, 600.5, 29, "0.0"], [1625.5, 608.5, 34, "0.0"]];
  const flaps = [[1386, 663, 31], [1434, 653, 30], [1531, 653, 30], [1578, 663, 30]];
  const rud = Array.from({ length: 41 }, (_, i) => i - 20);
  return (
    <svg viewBox="1287 438 384 397" className="block w-full overflow-visible font-medium" role="img" aria-label="Flight control surfaces">
      <Crosshair x={1409.5} y={447.5} cx={1456.5} cy={489.5} gap />
      <Crosshair x={1530.5} y={447.5} cx={1567.5} cy={484.5} />
      <circle cx="1446.500" cy="485" r="3" fill="none" stroke="#aaa" />
      <circle cx="1450" cy="486.500" r="3" fill="#fff" />
      <circle cx="1567.500" cy="485" r="3.500" fill="#fff" />
      <T x={1399} y={486} s={12} c={CYAN} rotate={-90}>PILOT</T>
      <T x={1615} y={485} s={12} c={CYAN} rotate={90}>CO-PILOT</T>
      <T x={1507} y={456} s={12} c={CYAN} xmlSpace="preserve">--  SS  --</T>
      <T x={1507} y={513} s={12} c={CYAN} xmlSpace="preserve">--  SS  --</T>
      {slats.map(([x, y, v]) => (
        <g key={x}>
          <rect x={x} y={y} width="33" height="10" fill="#d4d4d4" />
          <T x={x + 17} y={y - 7}>{v}</T>
        </g>
      ))}
      <T x={1506} y={553} s={11} c={CYAN}>SLAT</T>
      {spoilers.map(([x, y, h, v]) => (
        <g key={x}>
          <rect x={x} y={y} width="19" height={h} fill="none" stroke="#ddd" />
          <T x={x + 10} y={y - 8}>{v}</T>
        </g>
      ))}
      <T x={1506} y={589} s={11} c={CYAN}>SPLR</T>
      <g fill="none" stroke="#ccc">
        <rect x="1487.500" y="595.500" width="36" height="19" />
        <rect x="1488.500" y="653.500" width="36" height="19" />
        <rect x="1489.500" y="742.500" width="36" height="19" />
      </g>
      <T x={1505} y={605} s={11}>RET</T>
      <T x={1506} y={663}>4</T>
      <T x={1506} y={681} s={11} c={CYAN}>FLAP</T>
      {flaps.map(([x, y, v]) => (
        <g key={x}>
          <rect x={x} y={y} width="46" height="24" fill="#d4d4d4" />
          <T x={x + 24} y={y + 31}>{v}</T>
        </g>
      ))}
      {[1434, 1531].map((x) => (
        <g key={x}>
          <rect x={x} y="693" width="46" height="13" fill="#d4d4d4" />
          <path d={`M${x + 1} 704.500h44`} stroke="#000" />
          <T x={x + 24} y={713}>29</T>
        </g>
      ))}
      <Aileron x={1334.5} my={652} l="-2.0" name="LH AIL" />
      <Aileron x={1676.5} my={648} l="-1.9" name="RH AIL" />
      <g fill="none" stroke="#d4d4d4" strokeWidth="2">
        <path d="M1405 717H1414.500V770H1405M1405 751H1414" />
        <path d="M1607 717H1598.500V770H1607M1607 751H1599" />
      </g>
      <polygon points={tri.right(1400, 751)} fill="#fff" />
      <polygon points={tri.left(1613.5, 751)} fill="#fff" />
      <T x={1409} y={780}>0.0</T>
      <T x={1602} y={780}>0.1</T>
      <T x={1405} y={795} s={10} c={CYAN}>LH ELEV</T>
      <T x={1607} y={795} s={10} c={CYAN}>RH ELEV</T>
      <T x={1507} y={734} s={11} c={CYAN}>STAB</T>
      <T x={1506} y={752} s={14}>5.1</T>
      <T x={1506} y={793} s={11} c={CYAN}>RUD</T>
      <T x={1505} y={812} s={14}>10.8</T>
      {rud.map((i) => (
        <line
          key={i} x1="1506.500" y1={i % 5 ? 829 : 826} x2="1506.500" y2={i % 5 ? 832 : 833}
          transform={`rotate(${i * 3.1} 1506.500 757)`} stroke={i % 5 ? "#999" : "#fff"}
        />
      ))}
      <g fill="#000" stroke="#e00000" strokeWidth="1.500">
        <polygon points="1446,789 1440,799 1451,798" />
        <polygon points="1567,789 1562,798 1573,799" />
      </g>
      <T x={1432} y={806} s={11} c="fill-[#e00000]">37</T>
      <T x={1579} y={806} s={11} c="fill-[#e00000]">-37</T>
      <polygon points="1482,820 1493,824 1486,832" fill="#fff" />
    </svg>
  );
}

function QakPanel() {
  const b = "h-[49px] w-[49px] border-t-2 border-l-2 border-r border-b border-white border-r-[#999] border-b-[#999]";
  return (
    <div className="mr-px grid w-[92px] grid-cols-[32px_1fr] border-t border-l border-[#555]">
      <h2 className="flex rotate-180 items-center justify-center pl-2 text-center text-[14px] text-[#38c0ff] [writing-mode:vertical-rl]">SCREEN QAK</h2>
      <div className="flex flex-col gap-[6px] py-[10px]">
        {[1, 2, 3, 4, 5].map((n) => (
          <button key={n} className={`text-[12px] font-semibold text-[#38c0ff] ${b}`}>{n}</button>
        ))}
      </div>
      <h2 className="flex rotate-180 items-center justify-center border-b border-[#555] pl-2 text-[13px] text-[#38c0ff] [writing-mode:vertical-rl]">MFW</h2>
      <div className="border-t border-[#555] pt-[11px] pb-1">
        <button className={`text-[13px] font-semibold text-white ${b}`}>FLT</button>
      </div>
    </div>
  );
}

function Trims() {
  return (
    <svg viewBox="1287 860 250 148" className="block w-full" role="img" aria-label="Trims">
      <T x={1377} y={871} s={14} c={CYAN}>TRIMS</T>
      <T x={1309} y={927} s={11} c={CYAN}>STAB</T>
      <rect x="1290.500" y="936.500" width="38" height="19" fill="none" stroke="#ccc" />
      <T x={1308} y={946} s={14}>5.1</T>
      <T x={1336} y={900} s={11} c={CYAN}>NU</T>
      <T x={1335} y={979} s={11} c={CYAN}>ND</T>
      <path d="M1346 902.500H1356M1346 980H1356" stroke="#ddd" strokeWidth="2" />
      <path d="M1356 902V980" stroke="#999" strokeWidth="2" />
      <path d="M1351 915.500h5M1351 967.500h5" stroke="#ddd" />
      <path d="M1357 926V958" stroke="#00d800" strokeWidth="4" />
      <T x={1346} y={943} s={11} c="fill-[#00d800]" rotate={-90}>FBW</T>
      <polygon points={tri.left(1367, 957)} fill="#fff" />
      <T x={1465} y={880} s={14}>0.6</T>
      <path d="M1439 904Q1463.500 881 1489 904" fill="none" stroke="#999" strokeWidth="3" />
      <polygon points={tri.up(1463.5, 892)} fill="#fff" />
      <T x={1420} y={904} s={11} c={CYAN}>LWD</T>
      <T x={1508} y={906} s={11} c={CYAN}>RWD</T>
      <T x={1463.5} y={909} s={12} c={CYAN}>AIL</T>
      <T x={1466} y={953} s={14}>0.0 "</T>
      <polygon points={tri.down(1463.5, 970)} fill="#fff" />
      <path d="M1432 982.500H1497" stroke="#999" strokeWidth="3" />
      <path d="M1432.500 975V982M1495.500 975V982M1447.500 976V982M1463.500 976V982M1479.500 976V982" stroke="#ddd" />
      <T x={1420} y={984} s={12} c={CYAN}>NL</T>
      <T x={1508} y={984} s={12} c={CYAN}>NR</T>
      <T x={1463} y={996} s={12} c={CYAN}>RUDDER</T>
    </svg>
  );
}

function FuelChart() {
  const ys = [[100, 872.5], [75, 893.5], [50, 915.5], [25, 937.5], [0, 959.5]];
  return (
    <svg viewBox="1537 860 190 148" className="block w-full" role="img" aria-label="Fuel quantity">
      <g fill="none" stroke="#999">
        <rect x="1572.500" y="870.500" width="137" height="91" />
        {ys.map(([v, y]) => <path key={v} d={`M1563 ${y}H1572`} stroke="#ddd" />)}
        {[883, 904, 926, 948].map((y) => <path key={y} d={`M1568 ${y}.500h4`} stroke="#ddd" />)}
        <path d="M1573 893.500H1709M1573 915.500H1709M1573 937.500H1709M1573 959.500H1709" />
        <path d="M1680.500 871V961" stroke="#555" />
      </g>
      <rect x="1573" y="939" width="19" height="22" fill="#d4d4d4" />
      <rect x="1611" y="959" width="20" height="2" fill="#d4d4d4" />
      <rect x="1650" y="939" width="20" height="22" fill="#d4d4d4" />
      <rect x="1618" y="862" width="38" height="14" fill="#000" />
      <T x={1637} y={869} s={13} c={CYAN}>FUEL</T>
      {ys.map(([v, y]) => <T key={v} x={1559} y={y} s={11} c={SOFT} a="end">{v}</T>)}
      <T x={1557} y={972} s={11} c={SOFT}>lbs</T>
      <T x={1620} y={971} s={12}>153</T>
      <T x={1700} y={971} s={12}>0</T>
      <T x={1582} y={986} s={12}>4206</T>
      <T x={1622} y={986} s={12} c={CYAN}>C</T>
      <T x={1660} y={986} s={12}>4106</T>
      <T x={1700} y={986} s={12} c={CYAN}>Aft</T>
      <T x={1585} y={1000} s={11} c={CYAN}>L</T>
      <T x={1659} y={1000} s={11} c={CYAN}>R</T>
    </svg>
  );
}

function WaterChart() {
  const ys = [["1500", 886.5], ["1000", 901.5], ["500", 917.5], ["0", 935.5], ["-500", 952.5], ["1000", 968.5], ["1500", 984.5]];
  return (
    <svg viewBox="1727 860 185 148" className="block w-full" role="img" aria-label="Water ballast">
      <T x={1779} y={872} s={13} c={CYAN}>WATER</T>
      <T x={1828} y={874} s={14}>427</T>
      <T x={1878} y={874} s={14}>456</T>
      <g fill="none" stroke="#999">
        <rect x="1808.500" y="884.500" width="93" height="102" />
        {ys.slice(1).map(([, y]) => <path key={y} d={`M1800 ${y}H1901`} />)}
        <path d="M1800 933.500H1901M1799 886.500H1808" />
      </g>
      <rect x="1809" y="920" width="31" height="51" fill="#d4d4d4" />
      <rect x="1870" y="919" width="31" height="52" fill="#d4d4d4" />
      {ys.map(([v, y]) => <T key={y} x={1795} y={y} s={11} c={SOFT} a="end">{v}</T>)}
      <T x={1756} y={907} s={12} c={CYAN} rotate={-90}>FWD</T>
      <T x={1756} y={962} s={12} c={CYAN} rotate={-90}>AFT</T>
      <T x={1780} y={998} s={12} c={SOFT}>lbs</T>
      <T x={1827} y={997} s={14}>1044</T>
      <T x={1877} y={997} s={14}>1041</T>
    </svg>
  );
}

function MainWindow() {
  return (
    <Window
      title="FTE.MAIN -"
      frame="bg-[linear-gradient(180deg,#2a6cc0_0%,#2f8ce4_60%,#1e90f5_100%)]"
      bar="bg-[linear-gradient(90deg,#6aa6e0_0%,#3f7fcb_14%,#165fb2_35%,#1a5caa_70%,#6f9fd4_100%)]"
    >
      <div className="flex-1 border-t border-[#777] bg-black">
        <div className="grid grid-cols-[67fr_332fr_20fr_206fr]">
          <Apu />
          <Pfd />
          <span />
          <EnginePanel />
        </div>
        <StatusRow />
        <div className="grid grid-cols-[384fr_241fr]">
          <div>
            <FlightControls />
            <button className="ml-[2px] block h-6 w-[61px] border border-b-0 border-[#555] text-[13px] text-[#38c0ff]">MFW</button>
          </div>
          <div className="flex flex-col">
            <div className="flex justify-between pt-1 pr-[3px]">
              <div className="w-[67px]">
                <h2 className="text-center text-[12px] leading-6 whitespace-nowrap text-[#38c0ff]">PFCC1 DAG</h2>
                <Box className="h-[31px] border-[#555] text-[14px] font-bold text-white">OFF</Box>
              </div>
              <div className="w-[130px] border border-[#999] bg-white px-[5px] pt-[4px]">
                <h2 className="bg-black text-center text-[14px] leading-[22px] text-[#38c0ff]">ADAS MCW</h2>
                <p className="mt-[2px] ml-[2px] bg-[#ffff00] pl-[6px] text-[14px] leading-[22px] font-semibold text-[#999]">Caution</p>
              </div>
            </div>
            <div className="mt-[6px] flex flex-1 justify-between">
              <dl className="-ml-3 grid grid-cols-[auto_1fr] content-end gap-x-3 text-[14px] leading-[19px] text-white">
                <dt className="pl-10 text-[#38c0ff]">O2</dt><dd className="pl-2">92 %</dd>
                <dt className="pl-5 text-[#38c0ff]">WT</dt><dd>82230 lbs</dd>
                <dt className="text-[#38c0ff]">CG</dt><dd className="-ml-5 whitespace-nowrap">45.7% / &nbsp;<span className="text-[13px] text-[#bbb]">-0.6" Lat</span></dd>
                <dt className="pl-5 text-[#38c0ff]">FUEL</dt><dd className="pl-1">8467</dd>
              </dl>
              <QakPanel />
            </div>
          </div>
        </div>
        <div className="grid grid-cols-[250fr_190fr_185fr] border-t border-[#555]">
          <Trims />
          <FuelChart />
          <WaterChart />
        </div>
      </div>
    </Window>
  );
}

/* ---------- dashboard ---------- */

const GLOSS = "bg-[linear-gradient(#4a5062_0%,#3c4254_50%,#000_50%,#05060a_100%)]";

function Popout({ label, className = "" }) {
  return (
    <button aria-label={label} className={`flex items-center justify-center border border-[#ccc] ${GLOSS} ${className}`}>
      <svg viewBox="0 0 8 8" className="h-2 w-2">
        <path d="M1 7L6 2M3 1.500H6.500V5" fill="none" stroke="#fff" strokeWidth="1.300" />
      </svg>
    </button>
  );
}

function DashCell({ popout, top, children }) {
  return (
    <div className="relative flex flex-col items-center border-t border-r border-white bg-[linear-gradient(#4b5164_0%,#3f4556_50%,#000_50%,#000_88%,#1b2034_100%)]">
      {popout && <Popout label="Open" className="absolute top-px right-px h-[10px] w-[14px]" />}
      <div className="flex h-[31px] items-center pt-[2px] text-center">{top}</div>
      <div className="flex items-start pt-[2px]">{children}</div>
    </div>
  );
}

const MENU = [
  "ParameterTool", "Display Builder", "ChangeDesktop", "Performance",
  "Global Time", "Message Log", "Save Config", "Log Off",
  "IADS Logs", "Configuration", "HideDashboard", "Help",
];

function Dashboard() {
  const btn = `flex h-[19px] items-center justify-center border border-[#ccc] text-[13px] text-white ${GLOSS}`;
  return (
    <footer className="grid h-[61px] grid-cols-[240fr_240fr_240fr_240fr_242fr_236fr_481fr] border-l-2 border-[#ccc] bg-[#1b2034] text-white">
      <DashCell popout top={<span className="text-[14px]">Threshold: Normal</span>}>
        <div className="flex gap-1">
          <button className={`w-[67px] ${btn}`}>Log</button>
          <button className="flex h-[19px] w-[67px] items-center justify-center border border-[#ccc] bg-[linear-gradient(#2a50ff,#0018d8_60%,#0020ff)] text-[13px]">Enabled</button>
        </div>
      </DashCell>
      <DashCell top={<span className="text-[14px]">Test Point</span>}>
        <div className="flex gap-px">
          <button className={`w-[120px] ${btn}`}>Start Test Point</button>
          <Popout label="Test point options" className="h-[19px] w-[14px]" />
        </div>
      </DashCell>
      <DashCell popout top={<span className="text-[17px]">122:17:01:20</span>}>
        <p className="pt-[2px] text-[11px] leading-[18px] font-semibold">Flight: Test: Tail:70001</p>
      </DashCell>
      <DashCell top={<span className="text-[14px]">Data Edit Disabled</span>}>
        <button className={`w-[135px] ${btn}`}>Enable Data Editing</button>
      </DashCell>
      <DashCell popout top={<span className="text-[11px] leading-[13px] font-medium">FES:<br />See Message Log</span>}>
        <button disabled className={`w-[135px] flex h-[19px] items-center justify-center border border-[#ccc] whitespace-nowrap text-[9px] text-[#888] ${GLOSS}`}>
          Automated Analysis Disabled
        </button>
      </DashCell>
      <div className="flex border-t border-white bg-[#1b2034] px-[2px] pt-[2px]">
        <div className="flex flex-1 border-2 border-[#777] border-r-white border-b-white bg-white">
          <select
            size={3}
            aria-label="Windows"
            defaultValue="FTE.MAIN"
            className="h-full w-0 flex-1 overflow-hidden bg-white text-[13px] text-black outline-none [&>option]:h-[18px] [&>option]:px-[1px] [&>option]:leading-[18px] [&>option:checked]:bg-[linear-gradient(#3aacff,#3aacff)] [&>option:checked]:text-white"
          >
            <option>FTE.HQ</option>
            <option>FTE.Library</option>
            <option>FTE.MAIN</option>
          </select>
          <div className="flex w-[18px] flex-col items-center justify-between py-[6px]">
            <Arrow d="up" />
            <div className="h-[15px] w-[14px] rounded-sm border border-[#999] bg-[linear-gradient(90deg,#fff,#ddd)]" />
            <Arrow d="down" />
          </div>
        </div>
      </div>
      <div className="grid grid-cols-4 grid-rows-3 gap-px border-t border-l border-white px-px pt-[2px] pb-px">
        {MENU.map((m) => (
          <button key={m} className={`border border-[#ccc] text-[12px] leading-[16px] ${GLOSS}`}>{m}</button>
        ))}
      </div>
    </footer>
  );
}

export default function App() {
  return (
    <div className={`flex min-h-screen flex-col bg-[#0c4da2] ${UI}`}>
      <main className="grid flex-1 grid-cols-[640fr_640fr_639fr] pb-[2px]">
        <RsiWindow />
        <HqWindow />
        <MainWindow />
      </main>
      <Dashboard />
    </div>
  );
}
